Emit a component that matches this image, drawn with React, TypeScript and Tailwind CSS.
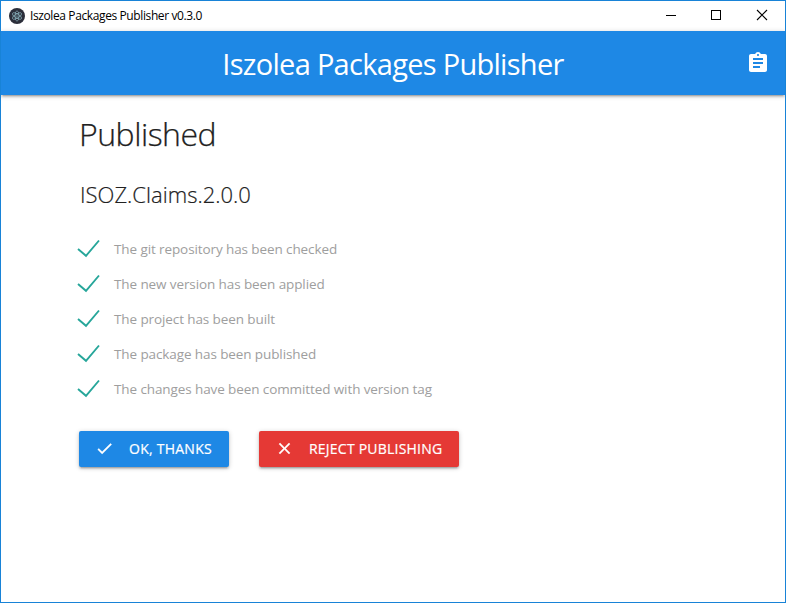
import React from "react";

const steps: string[] = [
  "The git repository has been checked",
  "The new version has been applied",
  "The project has been built",
  "The package has been published",
  "The changes have been committed with version tag",
];

function ElectronLogo() {
  return (
    <svg className="h-4 w-4" viewBox="0 0 16 16" fill="none">
      <circle cx="8" cy="8" r="8" fill="#2b2e3a" />
      <g stroke="#8fb9c4" strokeWidth="0.65">
        <ellipse cx="8" cy="8" rx="5.2" ry="2" transform="rotate(30 8 8)" />
        <ellipse cx="8" cy="8" rx="5.2" ry="2" transform="rotate(90 8 8)" />
        <ellipse cx="8" cy="8" rx="5.2" ry="2" transform="rotate(150 8 8)" />
      </g>
      <circle cx="8" cy="8" r="0.6" fill="#9feaf9" />
    </svg>
  );
}

function TitleBar() {
  return (
    <div className="flex h-[30px] shrink-0 items-center bg-white pl-2">
      <ElectronLogo />
      <span className="ml-[5px] whitespace-nowrap text-[12px] leading-[30px] tracking-[-0.39px] text-black">
        Iszolea Packages Publisher v0.3.0
      </span>
      <div className="-mr-px ml-auto flex h-full items-center text-black">
        <svg className="h-[30px] w-[46px]" viewBox="0 0 46 30" shapeRendering="crispEdges">
          <rect x="18" y="14" width="10" height="1" fill="currentColor" />
        </svg>
        <svg className="h-[30px] w-[46px]" viewBox="0 0 46 30" shapeRendering="crispEdges">
          <rect x="17.5" y="9.5" width="9" height="9" fill="none" stroke="currentColor" />
        </svg>
        <svg className="h-[30px] w-[46px]" viewBox="0 0 46 30">
          <path d="M17 9l10 10M27 9L17 19" stroke="currentColor" strokeWidth="1.1" />
        </svg>
      </div>
    </div>
  );
}

function Header() {
  return (
    <header className="relative z-10 flex h-16 shrink-0 items-center bg-[#1e88e5] pr-[15px] pl-[39px] text-white shadow-[0_2px_2px_0_rgba(0,0,0,0.14),0_3px_1px_-2px_rgba(0,0,0,0.12),0_1px_5px_0_rgba(0,0,0,0.2)]">
      <h1 className="flex-1 pt-px text-center text-[29px] leading-[61px] tracking-[-0.71px] whitespace-nowrap">
        Iszolea Packages Publisher
      </h1>
      <svg className="h-6 w-6" viewBox="0 0 24 24" fill="currentColor">
        <path d="M19 3h-4.18C14.4 1.84 13.3 1 12 1c-1.3 0-2.4.84-2.82 2H5c-1.1 0-2 .9-2 2v14c0 1.1.9 2 2 2h14c1.1 0 2-.9 2-2V5c0-1.1-.9-2-2-2zm-7 0c.55 0 1 .45 1 1s-.45 1-1 1-1-.45-1-1 .45-1 1-1zm2 14H7v-2h7v2zm3-4H7v-2h10v2zm0-4H7V7h10v2z" />
      </svg>
    </header>
  );
}

function Step({ text }: { text: string }) {
  return (
    <li className="flex h-[35px] items-center">
      <svg className="h-6 w-6" viewBox="0 0 24 24" fill="none">
        <path d="M1 12L9 18.8L22 3.5" stroke="#26a69a" strokeWidth="1.9" />
      </svg>
      <span className="ml-[13px] whitespace-nowrap text-[13.5px] leading-5 tracking-[-0.1px] text-[#9e9e9e]">{text}</span>
    </li>
  );
}

const buttonClass =
  "flex h-9 items-center rounded-[2px] text-[14px] text-white whitespace-nowrap shadow-[0_2px_2px_0_rgba(0,0,0,0.14),0_3px_1px_-2px_rgba(0,0,0,0.12),0_1px_5px_0_rgba(0,0,0,0.2)]";

export default function App() {
  return (
    <div className="flex h-[603px] w-[786px] flex-col overflow-hidden border border-[#1883d7] bg-white font-['Open_Sans','Noto_Sans',sans-serif]">
      <TitleBar />
      <Header />
      <main className="flex flex-col pl-[78px]">
        <h2 className="mt-[17px] text-[32px] leading-[44px] font-light tracking-[-0.5px] text-[#212121] [-webkit-text-stroke:0.25px]">Published</h2>
        <h3 className="mt-[23px] pl-px text-[22px] leading-[30px] font-light tracking-[0.02px] text-[#212121] [-webkit-text-stroke:0.2px]">ISOZ.Claims.2.0.0</h3>
        <ul className="mt-[22px] -ml-[2px]">
          {steps.map((text) => (
            <Step key={text} text={text} />
          ))}
        </ul>
        <div className="mt-[25px] flex gap-[30px]">
          <button className={buttonClass + " w-[150px] bg-[#1e88e5] pl-4"}>
            <svg className="-mt-px h-[19px] w-[19px]" viewBox="0 0 24 24" fill="currentColor" stroke="currentColor" strokeWidth="0.5">
              <path d="M9 16.17L4.83 12l-1.42 1.41L9 19 21 7l-1.41-1.41z" />
            </svg>
            <span className="-mt-px ml-[15px] tracking-[0.25px] [-webkit-text-stroke:0.2px]">OK, THANKS</span>
          </button>
          <button className={buttonClass + " w-[200px] bg-[#e53935] pl-4"}>
            <svg className="-mt-px h-[19px] w-[19px]" viewBox="0 0 24 24" fill="currentColor" stroke="currentColor" strokeWidth="0.5">
              <path d="M19 6.41L17.59 5 12 10.59 6.41 5 5 6.41 10.59 12 5 17.59 6.41 19 12 13.41 17.59 19 19 17.59 13.41 12z" />
            </svg>
            <span className="-mt-px ml-[15px] tracking-[0.22px] [-webkit-text-stroke:0.2px]">REJECT PUBLISHING</span>
          </button>
        </div>
      </main>
    </div>
  );
}
